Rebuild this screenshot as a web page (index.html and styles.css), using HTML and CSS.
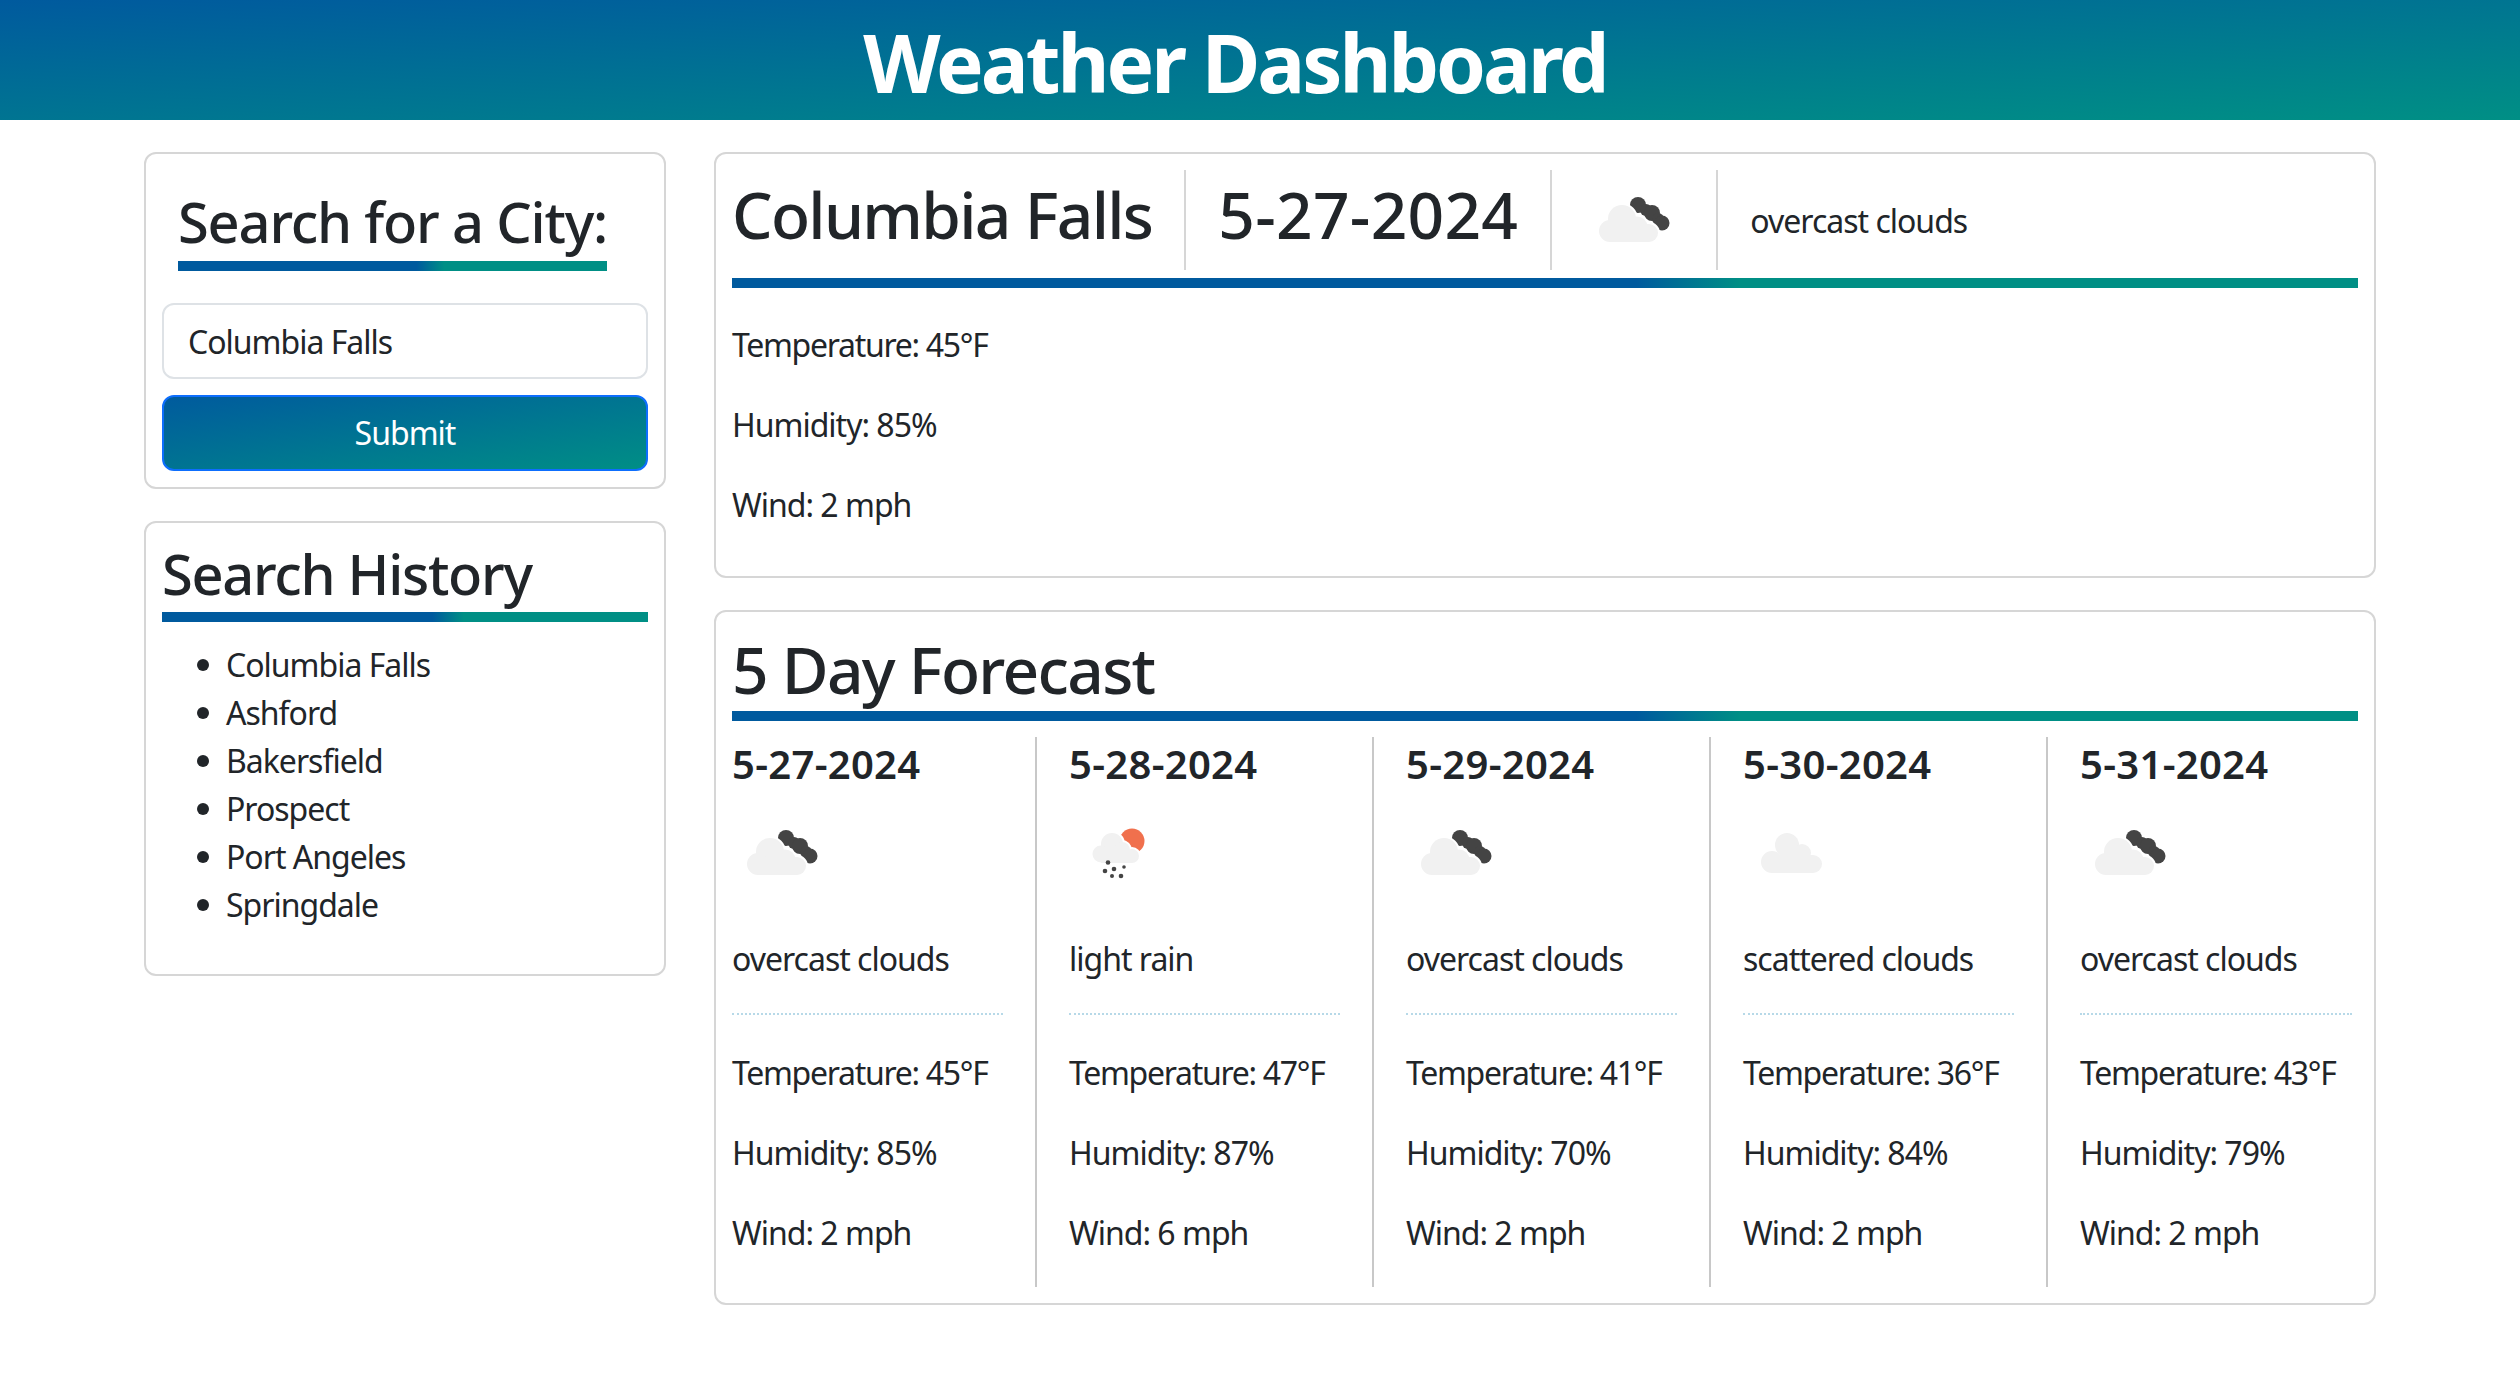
FILE: index.html
```html
<!DOCTYPE html>
<html lang="en">

<head>
  <meta charset="UTF-8">
  <meta name="viewport" content="width=device-width, initial-scale=1.0">
  <title>Weather Dashboard</title>
  <link rel="stylesheet" href="styles.css">
</head>

<body>
  <svg class="defs" width="0" height="0">
    <symbol id="cloudShape" viewBox="0 0 100 100">
      <circle cx="38" cy="49" r="14" />
      <circle cx="26" cy="61" r="11" />
      <circle cx="53" cy="57" r="10.5" />
      <circle cx="65" cy="63" r="9" />
      <rect x="26" y="54" width="39" height="18" />
    </symbol>
    <symbol id="overcast" viewBox="0 0 100 100">
      <g fill="#444">
        <circle cx="54" cy="35" r="8" />
        <circle cx="62" cy="40" r="6" />
        <circle cx="68" cy="43" r="8" />
        <circle cx="74" cy="49" r="6" />
        <circle cx="78" cy="53" r="7.5" />
      </g>
      <use href="#cloudShape" fill="#fff" stroke="#fff" stroke-width="4" />
      <use href="#cloudShape" fill="#f1f1f1" />
    </symbol>
    <symbol id="scattered" viewBox="0 0 100 100">
      <g fill="#f1f1f1">
        <circle cx="44" cy="42" r="12" />
        <circle cx="59" cy="50" r="9" />
        <circle cx="70" cy="61" r="9" />
        <circle cx="29" cy="59" r="11" />
        <rect x="29" y="52" width="41" height="18" />
      </g>
    </symbol>
    <symbol id="rain" viewBox="0 0 100 100">
      <circle cx="63" cy="38" r="12.5" fill="#f0704d" />
      <g fill="#fff" stroke="#fff" stroke-width="4">
        <circle cx="43" cy="41" r="11" />
        <circle cx="32" cy="51" r="8.5" />
        <circle cx="53" cy="47" r="8" />
        <circle cx="63" cy="53" r="7" />
      </g>
      <g fill="#f1f1f1">
        <circle cx="43" cy="41" r="11" />
        <circle cx="32" cy="51" r="8.5" />
        <circle cx="53" cy="47" r="8" />
        <circle cx="63" cy="53" r="7" />
        <rect x="32" y="48" width="31" height="12" />
      </g>
      <g fill="#444">
        <circle cx="39" cy="59.5" r="2.3" />
        <circle cx="36" cy="68" r="2.3" />
        <circle cx="45" cy="66" r="2.3" />
        <circle cx="55" cy="64" r="1.8" />
        <circle cx="43" cy="73" r="2" />
        <circle cx="52" cy="73" r="2.3" />
      </g>
    </symbol>
  </svg>

  <header class="top-bar">
    <h1 class="top-title">Weather Dashboard</h1>
  </header>

  <main class="page">
    <aside class="side">
      <form class="card search-card">
        <h3 class="underlined search-title">Search for a City:</h3>
        <input class="city-input" type="text" value="Columbia Falls">
        <button class="submit-btn" type="button">Submit</button>
      </form>

      <section class="card">
        <h3 class="underlined history-title">Search History</h3>
        <ul class="history">
          <li>Columbia Falls</li>
          <li>Ashford</li>
          <li>Bakersfield</li>
          <li>Prospect</li>
          <li>Port Angeles</li>
          <li>Springdale</li>
        </ul>
      </section>
    </aside>

    <div class="content">
      <section class="card">
        <div class="today-head">
          <h2 class="today-part">Columbia Falls</h2>
          <h2 class="today-part today-date">5-27-2024</h2>
          <div class="today-part"><svg class="icon"><use href="#overcast" /></svg></div>
          <div class="today-part today-desc">overcast clouds</div>
        </div>
        <div class="today-stats">
          <p class="temp">Temperature: 45°F</p>
          <p>Humidity: 85%</p>
          <p>Wind: 2 mph</p>
        </div>
      </section>

      <section class="card">
        <h2 class="underlined forecast-title">5 Day Forecast</h2>
        <div class="days">
          <div class="day">
            <h5>5-27-2024</h5>
            <svg class="icon"><use href="#overcast" /></svg>
            <p class="desc">overcast clouds</p>
            <hr class="dots">
            <p class="temp">Temperature: 45°F</p>
            <p>Humidity: 85%</p>
            <p class="wind">Wind: 2 mph</p>
          </div>
          <div class="day">
            <h5>5-28-2024</h5>
            <svg class="icon"><use href="#rain" /></svg>
            <p class="desc">light rain</p>
            <hr class="dots">
            <p class="temp">Temperature: 47°F</p>
            <p>Humidity: 87%</p>
            <p class="wind">Wind: 6 mph</p>
          </div>
          <div class="day">
            <h5>5-29-2024</h5>
            <svg class="icon"><use href="#overcast" /></svg>
            <p class="desc">overcast clouds</p>
            <hr class="dots">
            <p class="temp">Temperature: 41°F</p>
            <p>Humidity: 70%</p>
            <p class="wind">Wind: 2 mph</p>
          </div>
          <div class="day">
            <h5>5-30-2024</h5>
            <svg class="icon"><use href="#scattered" /></svg>
            <p class="desc">scattered clouds</p>
            <hr class="dots">
            <p class="temp">Temperature: 36°F</p>
            <p>Humidity: 84%</p>
            <p class="wind">Wind: 2 mph</p>
          </div>
          <div class="day">
            <h5>5-31-2024</h5>
            <svg class="icon"><use href="#overcast" /></svg>
            <p class="desc">overcast clouds</p>
            <hr class="dots">
            <p class="temp">Temperature: 43°F</p>
            <p>Humidity: 79%</p>
            <p class="wind">Wind: 2 mph</p>
          </div>
        </div>
      </section>
    </div>
  </main>
</body>

</html>
```

FILE: styles.css
```css
* {
  box-sizing: border-box;
}

body {
  margin: 0;
  font-family: "Noto Sans", "Open Sans", sans-serif;
  font-size: 32px;
  line-height: 48px;
  color: #212529;
  background: #fff;
  letter-spacing: -1px;
}

h1,
h2,
h3,
h5,
p,
ul {
  margin: 0;
}

.defs {
  position: absolute;
}

.top-bar {
  height: 120px;
  padding: 4px 50px 0 0;
  text-align: center;
  background: linear-gradient(to bottom right, #005a9e, #008f85);
}

.top-title {
  font-size: 80px;
  line-height: 116px;
  font-weight: 700;
  color: #fff;
  letter-spacing: -3px;
}

.page {
  display: flex;
  gap: 48px;
  padding: 32px 144px 0;
}

.side {
  flex: 0 0 522px;
  display: flex;
  flex-direction: column;
  gap: 32px;
}

.content {
  flex: 1;
  display: flex;
  flex-direction: column;
  gap: 32px;
}

.card {
  border: 2px solid #d6d6d6;
  border-radius: 12px;
  padding: 16px;
}

.underlined {
  padding-bottom: 6px;
  border-bottom: 10px solid;
  border-image: linear-gradient(to right, #005a9e 55.6%, #008f85 62%) 1;
  font-weight: 500;
}

h3 {
  font-size: 56px;
  line-height: 67px;
  letter-spacing: -1.3px;
}

h2 {
  font-size: 64px;
  line-height: 77px;
  letter-spacing: -1.7px;
}

.forecast-title {
  padding-top: 3px;
  padding-bottom: 3px;
}

.history-title {
  padding-top: 1px;
  padding-bottom: 5px;
}

.search-title {
  width: fit-content;
  margin: 18px 16px 32px;
  letter-spacing: -1.2px;
}

.city-input {
  display: block;
  width: 100%;
  height: 76px;
  padding: 0 24px;
  border: 2px solid #dee2e6;
  border-radius: 12px;
  font: inherit;
  letter-spacing: inherit;
  color: #212529;
}

.submit-btn {
  display: block;
  width: 100%;
  height: 76px;
  margin-top: 16px;
  border: 2px solid #0d6efd;
  border-radius: 12px;
  font: inherit;
  letter-spacing: inherit;
  color: #fff;
  background: linear-gradient(to bottom right, #005a9e, #008f85);
  background-origin: border-box;
}

.history {
  margin: 19px 0 29px;
  padding-left: 64px;
  list-style: none;
}

.history li::before {
  content: "";
  display: inline-block;
  width: 12px;
  height: 12px;
  margin: 0 17px 0 -29px;
  border-radius: 50%;
  background: #212529;
  vertical-align: 6px;
}

.today-head {
  display: flex;
  align-items: center;
  height: 100px;
  margin-bottom: 8px;
}

.today-part {
  display: flex;
  align-items: center;
  height: 100px;
  padding: 0 32px;
  border-left: 2px solid #d6d6d6;
}

h2.today-part {
  padding-bottom: 11px;
  font-weight: 500;
}

h2.today-date {
  letter-spacing: 0.3px;
}

.today-desc {
  padding-top: 2px;
}

.today-part:first-child {
  padding-left: 0;
  border-left: 0;
}

.today-stats {
  padding-top: 33px;
  border-top: 10px solid;
  border-image: linear-gradient(to right, #005a9e 55.6%, #008f85 62%) 1;
}

.today-stats p,
.day p {
  margin-bottom: 32px;
}

.today-stats p:last-child {
  margin-bottom: 31px;
}

.temp {
  letter-spacing: -1.3px;
}

.icon {
  display: block;
  width: 100px;
  height: 100px;
}

.days {
  display: flex;
  margin-top: 16px;
}

.day {
  padding: 0 32px;
  width: 337px;
  border-right: 2px solid #c8c8c8;
}

.day:first-child {
  width: 305px;
  padding-left: 0;
}

.day:last-child {
  width: 304px;
  border-right: 0;
  padding-right: 0;
}

.day h5 {
  margin-bottom: 15px;
  padding-top: 3px;
  font-size: 40px;
  line-height: 48px;
  font-weight: 600;
  letter-spacing: 0.3px;
}

.day p.desc {
  margin: 32px 0 0;
}

.dots {
  height: 0;
  margin: 30px 0 34px;
  border: 0;
  border-top: 2px dotted #b7d9e8;
}

.day p.wind {
  margin-bottom: 30px;
}
```
